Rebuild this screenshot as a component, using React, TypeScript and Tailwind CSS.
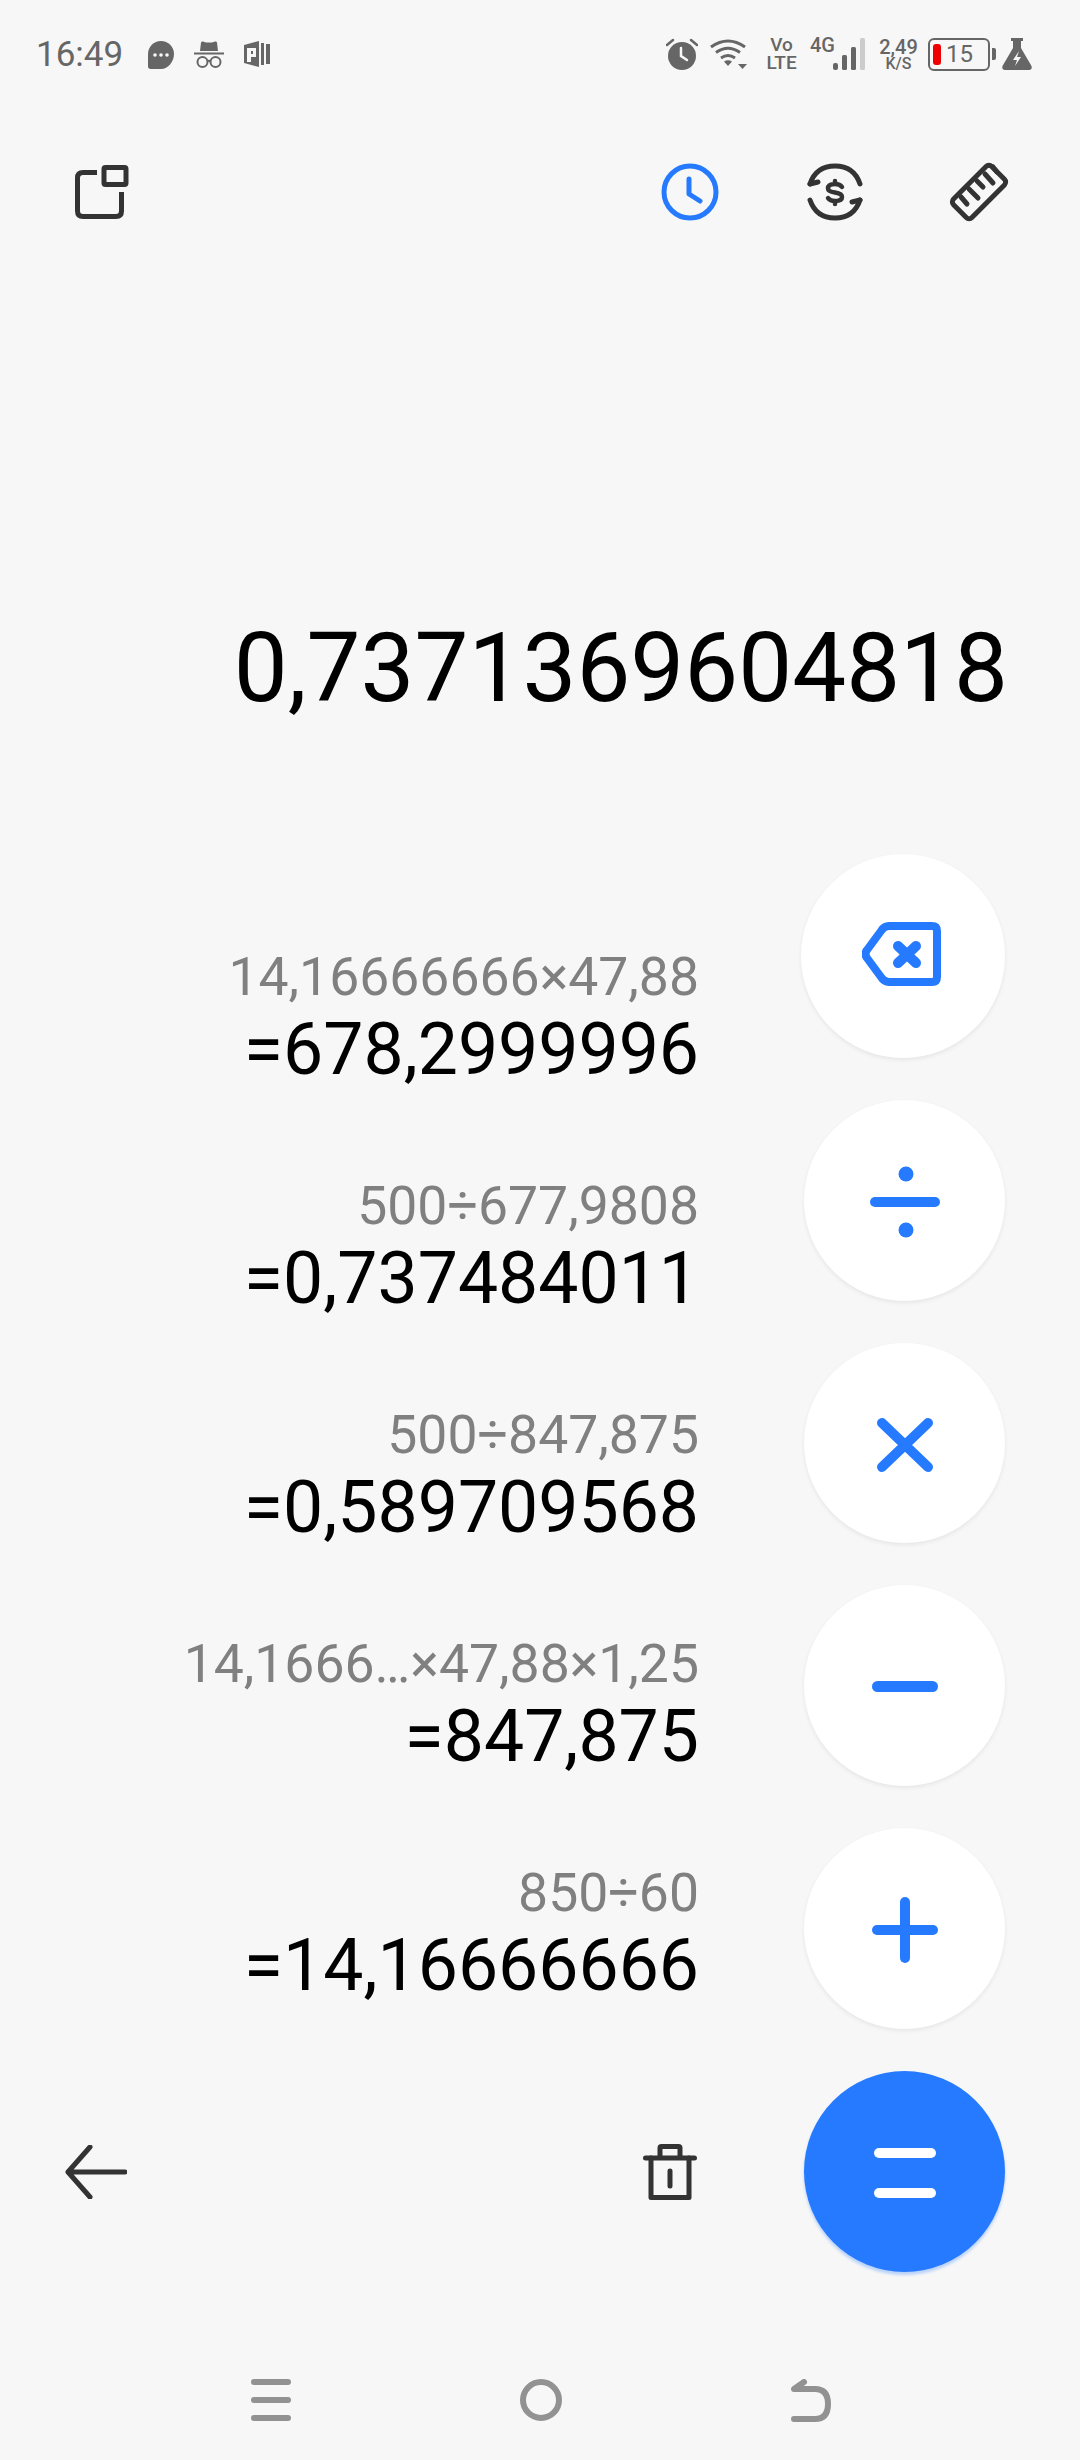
import type { ReactNode } from 'react';

const history = [
  { expr: '14,16666666×47,88', result: '=678,2999996' },
  { expr: '500÷677,9808', result: '=0,737484011' },
  { expr: '500÷847,875', result: '=0,589709568' },
  { expr: '14,1666…×47,88×1,25', result: '=847,875' },
  { expr: '850÷60', result: '=14,16666666' },
];

function StatusBar() {
  return (
    <div className="h-[108px] flex items-center pl-[36px] text-[#666666]">
      <span className="w-[112px] text-[35px] leading-[40px] mt-[1px]">16:49</span>
      <svg width="26" height="28" viewBox="0 0 26 28" className="mt-[1px]">
        <path d="M13 0C5.8 0 0 5.8 0 13V25.500C0 27 1 28 2.500 28H13C20.200 28 26 20.200 26 13S20.200 0 13 0Z" fill="#666666" />
        <circle cx="7" cy="14" r="1.800" fill="#f7f7f7" />
        <circle cx="13" cy="14" r="1.800" fill="#f7f7f7" />
        <circle cx="19" cy="14" r="1.800" fill="#f7f7f7" />
      </svg>
      <svg width="30" height="28" viewBox="0 0 30 28" className="ml-[20px]">
        <path d="M7 2.500Q7.500 1 9 1.500L12 2.500H18L21 1.500Q22.500 1 23 2.500L24 11H6Z" fill="#666666" />
        <rect x="0" y="12.500" width="30" height="2" fill="#666666" />
        <circle cx="8.500" cy="22" r="5" fill="none" stroke="#666666" strokeWidth="2" />
        <circle cx="21.500" cy="22" r="5" fill="none" stroke="#666666" strokeWidth="2" />
        <path d="M13 21.500Q15 20 17 21.500" fill="none" stroke="#666666" strokeWidth="2" />
      </svg>
      <svg width="26" height="26" viewBox="0 0 26 26" className="ml-[20px]">
        <path d="M0 4L15 0V26L0 22Z" fill="#666666" />
        <path d="M3 7H12V16H7V21H3Z" fill="#f7f7f7" />
        <path d="M7 10H9V13H7Z" fill="#666666" />
        <path d="M17 2H20V24H17ZM22 3H26V23H22Z" fill="#666666" />
      </svg>
      <div className="flex-1" />
      <svg width="32" height="32" viewBox="0 0 32 32">
        <circle cx="16" cy="18" r="14" fill="#666666" />
        <path d="M1 7L7 2M31 7L25 2" stroke="#666666" strokeWidth="2.500" strokeLinecap="round" />
        <path d="M15 10V18L21 22" fill="none" stroke="#f7f7f7" strokeWidth="2.500" strokeLinecap="round" />
      </svg>
      <svg width="38" height="30" viewBox="0 0 38 30" className="ml-[12px]">
        <path d="M1 8Q18 -4 35 8M6 13.500Q18 5 30 13.500M11 19Q18 14 25 19" fill="none" stroke="#666666" strokeWidth="3" />
        <path d="M14 22.500Q18 20 22 22.500L18 27Z" fill="#666666" />
        <path d="M28 25H37L32.500 30Z" fill="#666666" />
      </svg>
      <div className="ml-[19px] w-[29px] flex flex-col items-center font-medium text-[19px] leading-[18px]">
        <span>Vo</span>
        <span>LTE</span>
      </div>
      <span className="ml-[14px] w-[23px] self-start mt-[36px] text-[20px] leading-[18px] font-medium">4G</span>
      <svg width="32" height="32" viewBox="0 0 32 32">
        <rect x="0" y="25" width="5" height="7" rx="2" fill="#666666" />
        <rect x="9" y="17" width="5" height="15" rx="1.500" fill="#666666" />
        <rect x="18" y="9" width="5" height="23" rx="1.500" fill="#666666" />
        <rect x="27" y="0" width="5" height="32" rx="1.500" fill="#cccccc" />
      </svg>
      <div className="ml-[15px] w-[37px] flex flex-col items-center">
        <span className="text-[20px] leading-[18px] font-medium">2,49</span>
        <span className="text-[16px] leading-[15px] font-medium">K/S</span>
      </div>
      <div className="ml-[11px] w-[62px] h-[33px] border-[2.5px] border-[#666666] rounded-[6px] flex items-center pl-[3px]">
        <div className="w-[8px] h-[21px] rounded-[3px] bg-[#f00000]" />
        <span className="ml-[5px] text-[24px] leading-[26px]">15</span>
      </div>
      <div className="ml-[2px] w-[4px] h-[12px] rounded-r-[2px] bg-[#666666]" />
      <svg width="30" height="32" viewBox="0 0 30 32" className="ml-[6px]">
        <path d="M9 0H21V3H19V10L29.500 28Q30.500 32 27 32H3Q-0.500 32 0.500 28L11 10V3H9Z" fill="#666666" />
        <path d="M17 13L11 22H15L13 28L19 19H15Z" fill="#f7f7f7" />
      </svg>
      <div className="w-[48px]" />
    </div>
  );
}

function Toolbar() {
  return (
    <div className="h-[168px] flex items-center">
      <svg width="54" height="54" viewBox="0 0 54 54" className="ml-[75px]" fill="none" stroke="#333333" strokeWidth="5">
        <path d="M22 7.500H8Q2.500 7.500 2.500 13V46Q2.500 51.500 8 51.500H41Q46.500 51.500 46.500 46V27" />
        <rect x="29" y="2.500" width="22" height="17" rx="1.500" />
      </svg>
      <svg width="58" height="58" viewBox="0 0 58 58" className="ml-[532px]" fill="none" stroke="#267aff" strokeWidth="5" strokeLinecap="round" strokeLinejoin="round">
        <circle cx="29" cy="29" r="26" />
        <path d="M28 16V31L39 38" />
      </svg>
      <svg width="56" height="58" viewBox="0 0 56 58" className="ml-[88px]" fill="none" stroke="#333333" strokeWidth="5" strokeLinecap="round" strokeLinejoin="round">
        <path d="M3 21Q9 3 28 3Q47 3 53 21M3 37Q9 55 28 55Q47 55 53 37" />
        <path d="M3 21L11 19M53 37L45 39" />
        <path d="M35 24Q33 21 28 21Q21 21 21 25.500Q21 28.500 28 29.500Q35 30.500 35 34Q35 38 28 38Q23 38 21 35M28 18V21M28 38V41" strokeWidth="4.500" />
      </svg>
      <svg width="60" height="60" viewBox="0 0 60 60" className="ml-[86px]" fill="none" stroke="#333333" strokeWidth="5" strokeLinecap="round" strokeLinejoin="round">
        <rect x="3" y="17" width="54" height="26" rx="4" transform="rotate(-45 30 30)" />
        <path d="M13 33L19 40M21 25L30 34M29 17L35 23M37 10L45 19M45 3L49 8" transform="translate(-1 2)" />
      </svg>
    </div>
  );
}

function RoundButton({ children, big, primary }: { children: ReactNode; big?: boolean; primary?: boolean }) {
  return (
    <div
      className={`rounded-full flex items-center justify-center ${big ? 'w-[204px] h-[204px]' : 'w-[201px] h-[201px]'} ${
        primary ? 'bg-[#267aff] shadow-[0_3px_3px_rgba(38,122,255,0.3)]' : 'bg-white shadow-[0_2px_4px_rgba(0,0,0,0.07)]'
      }`}
    >
      {children}
    </div>
  );
}

function HistoryRow({ expr, result }: { expr: string; result: string }) {
  return (
    <div className="flex flex-col items-end">
      <span className="text-[53.5px] leading-[64px] text-[#808080] whitespace-nowrap">{expr}</span>
      <span className="text-[71.5px] leading-[82px] text-black whitespace-nowrap">{result}</span>
    </div>
  );
}

export default function App() {
  return (
    <div className="w-[1080px] h-[2460px] bg-[#f7f7f7] flex flex-col overflow-hidden font-['Roboto',sans-serif]">
      <StatusBar />
      <Toolbar />

      <div className="h-[578px] pt-[336px] pr-[72px] flex justify-end">
        <span className="text-[96px] leading-[112px] text-black">0,7371369604818</span>
      </div>

      <div className="h-[1418px] flex">
        <div className="w-[699px] flex flex-col">
          <div className="flex flex-col gap-[83px] pt-[91px]">
            {history.map((row) => (
              <HistoryRow key={row.expr} expr={row.expr} result={row.result} />
            ))}
          </div>
          <div className="mt-auto h-[201px] flex items-center">
            <svg width="62" height="54" viewBox="0 0 62 54" className="ml-[65px]" fill="none" stroke="#333333" strokeWidth="5" strokeLinecap="round" strokeLinejoin="round">
              <path d="M60 27H3M25 2L3 27L25 52" />
            </svg>
            <svg width="54" height="56" viewBox="0 0 54 56" className="ml-[516px]" fill="none" stroke="#333333" strokeWidth="5" strokeLinecap="round" strokeLinejoin="round">
              <path d="M2.500 14H51.500M17 14V4Q17 2.500 18.500 2.500H35.500Q37 2.500 37 4V14" />
              <path d="M8 14V53.500H46V14M27 27V42" />
            </svg>
          </div>
        </div>

        <div className="ml-[102px] w-[204px] flex flex-col items-end gap-[42px]">
          <RoundButton big>
            <svg width="80" height="64" viewBox="0 0 80 64" fill="none" stroke="#267aff" strokeWidth="8" strokeLinecap="round" strokeLinejoin="round" className="-ml-[3px] -mt-[3px]">
              <path d="M5 28L19 9Q22 4 27 4H70Q75 4 75 9V55Q75 60 70 60H27Q22 60 19 55L5 36Q2 32 5 28Z" />
              <path d="M36 24L54 41M54 24L36 41" strokeWidth="10" />
            </svg>
          </RoundButton>
          <RoundButton>
            <svg width="70" height="72" viewBox="0 0 70 72" fill="#267aff" className="mt-[3px]">
              <circle cx="36" cy="8" r="7.500" />
              <rect x="0" y="31" width="70" height="10" rx="5" />
              <circle cx="36" cy="64" r="7.500" />
            </svg>
          </RoundButton>
          <RoundButton>
            <svg width="56" height="54" viewBox="0 0 56 54" fill="none" stroke="#267aff" strokeWidth="10" strokeLinecap="round" className="mt-[3px]">
              <path d="M5 5L51 49M51 5L5 49" />
            </svg>
          </RoundButton>
          <RoundButton>
            <svg width="66" height="12" viewBox="0 0 66 12" fill="#267aff" className="mt-[2px]">
              <rect x="0" y="0" width="66" height="11" rx="5.500" />
            </svg>
          </RoundButton>
          <RoundButton>
            <svg width="66" height="66" viewBox="0 0 66 66" fill="#267aff" className="mt-[2px]">
              <rect x="0" y="28" width="66" height="10" rx="5" />
              <rect x="28" y="0" width="10" height="66" rx="5" />
            </svg>
          </RoundButton>
          <RoundButton primary>
            <svg width="62" height="50" viewBox="0 0 62 50" fill="#ffffff" className="mt-[2px]">
              <rect x="0" y="0" width="62" height="10" rx="5" />
              <rect x="0" y="40" width="62" height="10" rx="5" />
            </svg>
          </RoundButton>
        </div>
      </div>

      <div className="flex-1 flex items-start pt-[107px] pl-[251px] gap-[229px]">
        <svg width="40" height="42" viewBox="0 0 40 42" fill="#929292">
          <rect x="0" y="0" width="40" height="6" rx="3" />
          <rect x="0" y="18" width="40" height="6" rx="3" />
          <rect x="0" y="36" width="40" height="6" rx="3" />
        </svg>
        <svg width="42" height="42" viewBox="0 0 42 42" fill="none" stroke="#929292" strokeWidth="6">
          <circle cx="21" cy="21" r="18" />
        </svg>
        <svg width="40" height="43" viewBox="0 0 40 43" fill="none" stroke="#929292" strokeWidth="6" strokeLinecap="round" strokeLinejoin="round">
          <path d="M3 40H24Q37 40 37 25Q37 10 24 10H3L13 3" />
        </svg>
      </div>
    </div>
  );
}
